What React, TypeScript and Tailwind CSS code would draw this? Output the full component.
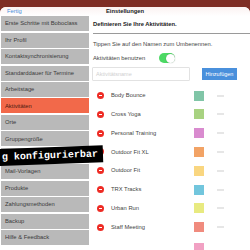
import React from "react";

const menu = [
  "Erste Schritte mit Boboclass",
  "Ihr Profil",
  "Kontaktsynchronisierung",
  "Standarddauer für Termine",
  "Arbeitstage",
  "Aktivitäten",
  "Orte",
  "Gruppengröße",
  "",
  "Mail-Vorlagen",
  "Produkte",
  "Zahlungsmethoden",
  "Backup",
  "Hilfe & Feedback",
];

const items: [string, string][] = [
  ["Body Bounce", "#80c5a7"],
  ["Cross Yoga", "#a8d281"],
  ["Personal Training", "#d98bcf"],
  ["Outdoor Fit XL", "#f2a365"],
  ["Outdoor Fit", "#f9d680"],
  ["TRX Tracks", "#72c6dd"],
  ["Urban Run", "#e8ea80"],
  ["Staff Meeting", "#f08b7e"],
];

export default function App() {
  return (
    <div
      className="relative w-[250px] h-[250px] overflow-hidden bg-[#7e2d24]"
      style={{ fontFamily: '"Liberation Sans", Arial, sans-serif' }}
    >
      <div className="h-[7px]" />
      <div className="h-[243px] bg-white rounded-t-[6px] flex flex-col">
        <div className="h-[13px] relative flex items-center bg-gradient-to-b from-[#fbf2f1] to-white rounded-t-[6px]">
          <span className="absolute left-[7px] text-[5.8px] text-[#4a8fdc]">Fertig</span>
          <span className="w-full text-center text-[5.8px] text-[#222] font-bold">Einstellungen</span>
        </div>
        <div className="flex flex-1 pt-[0.5px]">
          <div className="w-[88px] ml-[1px] flex flex-col">
            {menu.map((m, i) => (
              <div
                key={i}
                className={`h-[15px] mb-[1.46px] shrink-0 flex items-center pl-[4px] text-[5.8px] ${
                  m === "Aktivitäten" ? "bg-[#f2694a] text-[#4a1a10]" : "bg-[#b9b9b9] text-[#3a3a3a]"
                }`}
              >
                {m}
              </div>
            ))}
          </div>
          <div className="flex-1 pl-[4px] flex flex-col">
            <div className="h-[16px] flex items-center text-[5.8px] font-bold text-[#222]">
              Definieren Sie Ihre Aktivitäten.
            </div>
            <div className="h-[1px] bg-[#9a9a9a] mt-[1px]" />
            <div className="h-[18px] flex items-center text-[5.8px] text-[#444] mt-[1px]">
              Tippen Sie auf den Namen zum Umbenennen.
            </div>
            <div className="h-[10px] flex items-center text-[5.8px] text-[#444]">
              <span>Aktivitäten benutzen</span>
              <div className="ml-[14px] w-[16px] h-[10px] rounded-full bg-[#4cd964] relative">
                <div className="absolute right-[0.5px] top-[0.5px] w-[9px] h-[9px] rounded-full bg-white shadow-[0_0_1px_rgba(0,0,0,0.4)]" />
              </div>
            </div>
            <div className="flex items-center mt-[4px]">
              <div className="w-[98px] h-[14px] ml-[-1px] border border-[#e2e2e2] rounded-[1px] flex items-center pl-[3px] text-[5.5px] text-[#cfcfcf]">
                Aktivitätsname
              </div>
              <div className="ml-[12px] w-[35px] h-[12px] bg-[#4a90dc] flex items-center justify-center text-[5.5px] text-white">
                Hinzufügen
              </div>
            </div>
            <div className="flex flex-col mt-[5px]">
              {items.map(([n, c]) => (
                <div key={n} className="h-[18.8px] shrink-0 flex items-center">
                  <div className="ml-[4px] w-[7px] h-[7px] rounded-full bg-[#ee2b24] flex items-center justify-center">
                    <div className="w-[3.5px] h-[1px] bg-white" />
                  </div>
                  <span className="ml-[7px] w-[83px] text-[5.8px] text-[#444]">{n}</span>
                  <div className="w-[10px] h-[10px]" style={{ backgroundColor: c }} />
                  <div className="ml-[13px] w-[7px] h-[2px] bg-[#e6e6e6]" />
                </div>
              ))}
              <div className="flex mt-[6px]">
                <div className="ml-[101px] w-[10px] h-[10px] bg-[#f1a1c3]" />
              </div>
            </div>
          </div>
        </div>
      </div>
      <div className="absolute left-[-3px] top-[149px] w-[106px] h-[17px] bg-black flex items-center pl-[5px] rotate-[-2deg] origin-left">
        <span
          className="text-white text-[10px] font-bold"
          style={{ fontFamily: '"Liberation Mono", "DejaVu Sans Mono", monospace' }}
        >
          g konfigurierbar
        </span>
      </div>
    </div>
  );
}
